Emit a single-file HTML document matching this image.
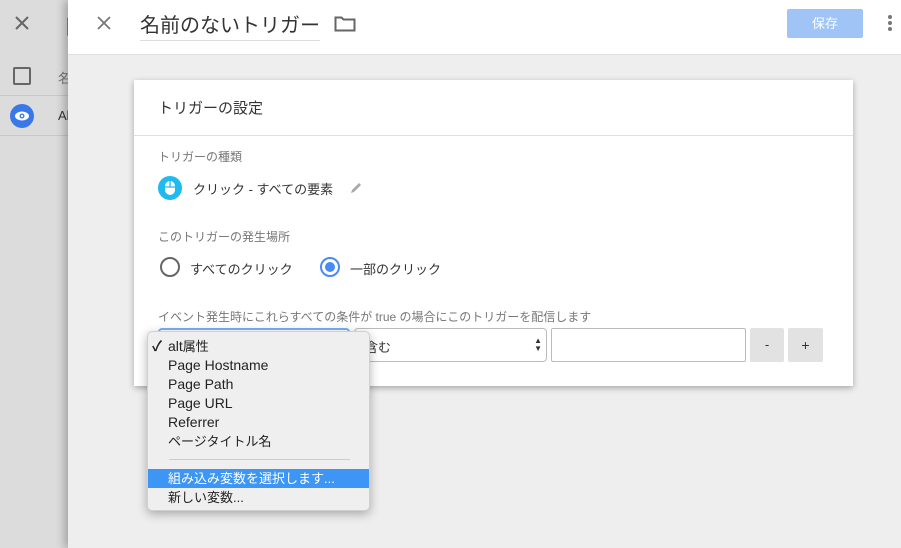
<!DOCTYPE html>
<html><head><meta charset="utf-8"><style>
*{box-sizing:border-box;margin:0;padding:0}
body{width:901px;height:548px;overflow:hidden;position:relative;background:#ededed;font-family:"Liberation Sans","Noto Sans CJK JP",sans-serif;color:#333}
.abs{position:absolute}
.left{left:0;top:0;width:68px;height:548px;background:#dcdcdc}
.panel{left:68px;top:0;width:833px;height:548px;background:#eeeeee;box-shadow:-4px 0 8px rgba(0,0,0,.25)}
.hdr{left:0;top:0;width:833px;height:55px;background:#fff;border-bottom:1px solid #e0e0e0}
.card{left:66px;top:80px;width:719px;height:306px;background:#fff;box-shadow:0 2px 6px rgba(0,0,0,.3)}
.lbl{font-size:12px;color:#777}
.menu{left:147px;top:331px;width:223px;height:180px;background:#efefef;border-radius:5px;box-shadow:0 3px 10px rgba(0,0,0,.3);border:1px solid #d0d0d0}
.mi{position:absolute;left:20px;font-size:14px;color:#222;height:19px;line-height:19px}
.cj{font-size:13px}
</style></head><body>
<div class="abs left">
 <svg class="abs" style="left:14px;top:15px" width="16" height="16"><path d="M2 2L14 14M14 2L2 14" stroke="#666" stroke-width="2"/></svg>
 <div class="abs" style="left:60px;top:10px;font-size:22px;color:#555">ト</div>
 <div class="abs" style="left:13px;top:67px;width:18px;height:18px;border:2px solid #666;border-radius:2px"></div>
 <div class="abs" style="left:58px;top:68px;font-size:13px;color:#777">名</div>
 <div class="abs" style="left:0;top:95px;width:68px;height:1px;background:#c8c8c8"></div>
 <div class="abs" style="left:10px;top:104px;width:24px;height:24px;border-radius:50%;background:#3b78e7"></div>
 <svg class="abs" style="left:14px;top:110px" width="16" height="12"><ellipse cx="8" cy="6" rx="7" ry="4.5" fill="#fff"/><circle cx="8" cy="6" r="2.5" fill="#3b78e7"/><circle cx="8" cy="6" r="1.2" fill="#fff"/></svg>
 <div class="abs" style="left:58px;top:108px;font-size:13px;color:#333">Al</div>
 <div class="abs" style="left:0;top:135px;width:68px;height:1px;background:#c8c8c8"></div>
</div>
<div class="abs panel">
 <div class="abs hdr">
  <svg class="abs" style="left:29px;top:16px" width="14" height="14"><path d="M1 1L13 13M13 1L1 13" stroke="#777" stroke-width="1.8"/></svg>
  <div class="abs" style="left:72px;top:9px;font-size:20px;color:#333;width:180px;border-bottom:1px solid #ddd;height:32px">名前のないトリガー</div>
  <svg class="abs" style="left:266px;top:15px" width="22" height="17"><path d="M1.5 2.5h6l2 2h11v11h-19z" fill="none" stroke="#666" stroke-width="2"/></svg>
  <div class="abs" style="left:719px;top:9px;width:76px;height:29px;background:#a1c4f7;border-radius:2px;color:#fff;font-size:13px;text-align:center;line-height:29px">保存</div>
  <div class="abs" style="left:820px;top:15px;width:4px;height:4px;border-radius:2px;background:#777;box-shadow:0 6px 0 #777,0 12px 0 #777"></div>
 </div>
 <div class="abs card">
  <div class="abs" style="left:24px;top:17px;font-size:15px;color:#333">トリガーの設定</div>
  <div class="abs" style="left:0;top:55px;width:719px;height:1px;background:#e0e0e0"></div>
  <div class="abs lbl" style="left:24px;top:68px">トリガーの種類</div>
  <div class="abs" style="left:24px;top:96px;width:24px;height:24px;border-radius:50%;background:#1ebaf0"></div>
  <svg class="abs" style="left:30px;top:100px" width="12" height="16"><rect x="1" y="1" width="10" height="14" rx="5" fill="#fff"/><path d="M1 7h10M6 1v6" stroke="#1ebaf0" stroke-width="1.3"/></svg>
  <div class="abs" style="left:59px;top:99px;font-size:13px;color:#333">クリック - すべての要素</div>
  <svg class="abs" style="left:216px;top:101px" width="13" height="13"><path d="M1 12l1-3 7-7 2 2-7 7z" fill="#aaa"/></svg>
  <div class="abs lbl" style="left:24px;top:148px">このトリガーの発生場所</div>
  <div class="abs" style="left:26px;top:177px;width:20px;height:20px;border-radius:50%;border:2px solid #666"></div>
  <div class="abs" style="left:56px;top:179px;font-size:13px">すべてのクリック</div>
  <div class="abs" style="left:186px;top:177px;width:20px;height:20px;border-radius:50%;border:2px solid #4a8af4"></div>
  <div class="abs" style="left:191px;top:182px;width:10px;height:10px;border-radius:50%;background:#4a8af4"></div>
  <div class="abs" style="left:216px;top:179px;font-size:13px">一部のクリック</div>
  <div class="abs lbl" style="left:24px;top:228px">イベント発生時にこれらすべての条件が true の場合にこのトリガーを配信します</div>
  <div class="abs" style="left:24px;top:248px;width:192px;height:34px;border:2px solid #7ab0f4;border-radius:4px"></div>
  <div class="abs" style="left:220px;top:248px;width:193px;height:34px;border:1px solid #bbb;border-radius:4px;font-size:13px;padding:8px 10px">含む<span style="position:absolute;right:4px;top:8px;font-size:8px;line-height:8px">▲<br>▼</span></div>
  <div class="abs" style="left:417px;top:248px;width:195px;height:34px;border:1px solid #bbb;border-radius:2px"></div>
  <div class="abs" style="left:616px;top:248px;width:34px;height:34px;background:#e2e2e2;border-radius:2px;text-align:center;line-height:34px;font-size:13px">-</div>
  <div class="abs" style="left:654px;top:248px;width:35px;height:34px;background:#e2e2e2;border-radius:2px;text-align:center;line-height:34px;font-size:14px">+</div>
 </div>
</div>
<div class="abs menu">
 <div class="mi" style="left:4px;top:5px;font-weight:bold">✓</div>
 <div class="mi" style="top:5px">alt<span class="cj">属性</span></div>
 <div class="mi" style="top:24px">Page Hostname</div>
 <div class="mi" style="top:43px">Page Path</div>
 <div class="mi" style="top:62px">Page URL</div>
 <div class="mi" style="top:81px">Referrer</div>
 <div class="mi cj" style="top:100px">ページタイトル名</div>
 <div class="abs" style="left:21px;top:127px;width:181px;height:1px;background:#ccc"></div>
 <div class="abs" style="left:0;top:137px;width:221px;height:19px;background:#3d96f6"></div>
 <div class="mi cj" style="top:137px;color:#fff">組み込み変数を選択します...</div>
 <div class="mi cj" style="top:156px">新しい変数...</div>
</div>
</body></html>
